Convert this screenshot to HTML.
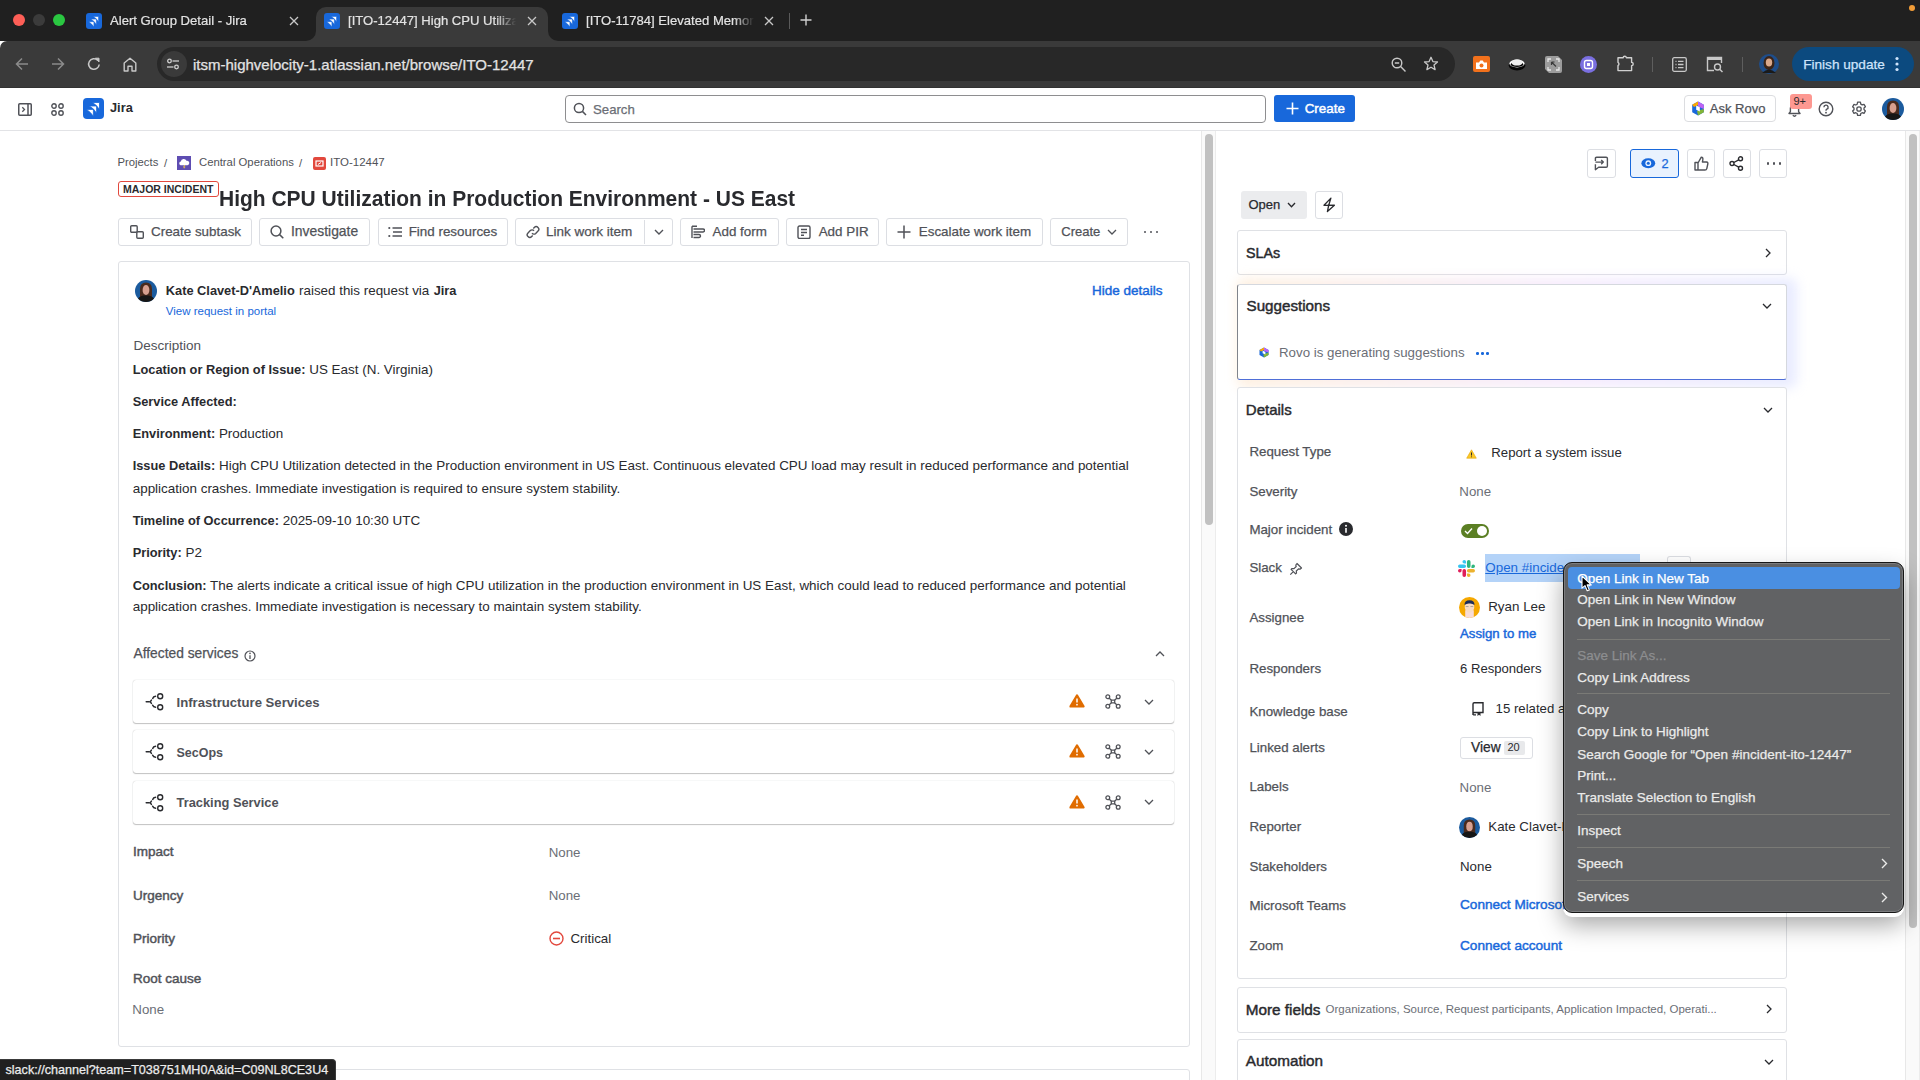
<!DOCTYPE html>
<html><head><meta charset="utf-8"><title>ITO-12447</title>
<style>
*{box-sizing:border-box;margin:0;padding:0}
html,body{width:1920px;height:1080px;overflow:hidden;background:#fff;font-family:"Liberation Sans",sans-serif;color:#292a2e}
.a{position:absolute}
.t{white-space:nowrap}
b{font-weight:bold}
</style></head><body>
<div class="a" style="left:0px;top:0px;width:1920px;height:41px;background:#202020"></div>
<div class="a" style="left:13px;top:14px;width:12px;height:12px;border-radius:50%;background:#fe5f57"></div>
<div class="a" style="left:33px;top:14px;width:12px;height:12px;border-radius:50%;background:#3b3b3b"></div>
<div class="a" style="left:53px;top:14px;width:12px;height:12px;border-radius:50%;background:#2ac741"></div>
<div class="a" style="left:316px;top:7px;width:232px;height:36px;background:#3a3a3a;border-radius:10px 10px 0 0"></div>
<div class="a" style="left:306px;top:31px;width:10px;height:10px;background:#3a3a3a"></div>
<div class="a" style="left:296px;top:21px;width:20px;height:20px;background:#202020;border-radius:0 0 10px 0"></div>
<div class="a" style="left:548px;top:31px;width:10px;height:10px;background:#3a3a3a"></div>
<div class="a" style="left:548px;top:21px;width:20px;height:20px;background:#202020;border-radius:0 0 0 10px"></div>
<div class="a" style="left:0px;top:41px;width:1920px;height:47px;background:#3a3a3a;border-radius:7px 0 0 0"></div>
<div class="a" style="left:0px;top:87px;width:1920px;height:1px;background:#323232"></div>
<svg class="a" style="left:86px;top:13px" width="16" height="16" viewBox="0 0 21 21"><rect width="21" height="21" rx="3.94" fill="#1868db"/><path d="M9.5 4.5L16.5 4.5L16.5 11.5L13.4 7.6ZM6.3999999999999995 8.0L13.6 8.0L13.6 15.2L10.5 11.1ZM3.6000000000000005 11.4L10.4 11.4L10.4 18.2L7.300000000000001 14.5Z" fill="#fff" stroke="#1868db" stroke-width="0.8" stroke-linejoin="round"/></svg>
<div class="a t" style="left:110px;top:14.41px;font-size:13.1px;line-height:13.1px;color:#e3e3e3;-webkit-text-stroke:0.2px #e3e3e3;width:172px;overflow:hidden;-webkit-mask-image:linear-gradient(90deg,#000 87%,transparent 99%)">Alert Group Detail - Jira</div>
<svg class="a" style="left:289px;top:16px;" width="10" height="10" viewBox="0 0 10 10" fill="none"><path d="M1 1L9 9M9 1L1 9" stroke="#c8c8c8" stroke-width="1.3"/></svg>
<svg class="a" style="left:324px;top:13px" width="16" height="16" viewBox="0 0 21 21"><rect width="21" height="21" rx="3.94" fill="#1868db"/><path d="M9.5 4.5L16.5 4.5L16.5 11.5L13.4 7.6ZM6.3999999999999995 8.0L13.6 8.0L13.6 15.2L10.5 11.1ZM3.6000000000000005 11.4L10.4 11.4L10.4 18.2L7.300000000000001 14.5Z" fill="#fff" stroke="#1868db" stroke-width="0.8" stroke-linejoin="round"/></svg>
<div class="a t" style="left:348px;top:14.41px;font-size:13.1px;line-height:13.1px;color:#e3e3e3;-webkit-text-stroke:0.2px #e3e3e3;width:170px;overflow:hidden;-webkit-mask-image:linear-gradient(90deg,#000 87%,transparent 99%)">[ITO-12447] High CPU Utilization in Production</div>
<svg class="a" style="left:527px;top:16px;" width="10" height="10" viewBox="0 0 10 10" fill="none"><path d="M1 1L9 9M9 1L1 9" stroke="#c8c8c8" stroke-width="1.3"/></svg>
<svg class="a" style="left:562px;top:13px" width="16" height="16" viewBox="0 0 21 21"><rect width="21" height="21" rx="3.94" fill="#1868db"/><path d="M9.5 4.5L16.5 4.5L16.5 11.5L13.4 7.6ZM6.3999999999999995 8.0L13.6 8.0L13.6 15.2L10.5 11.1ZM3.6000000000000005 11.4L10.4 11.4L10.4 18.2L7.300000000000001 14.5Z" fill="#fff" stroke="#1868db" stroke-width="0.8" stroke-linejoin="round"/></svg>
<div class="a t" style="left:586px;top:14.41px;font-size:13.1px;line-height:13.1px;color:#e3e3e3;-webkit-text-stroke:0.2px #e3e3e3;width:170px;overflow:hidden;-webkit-mask-image:linear-gradient(90deg,#000 87%,transparent 99%)">[ITO-11784] Elevated Memory Usage</div>
<svg class="a" style="left:764px;top:16px;" width="10" height="10" viewBox="0 0 10 10" fill="none"><path d="M1 1L9 9M9 1L1 9" stroke="#c8c8c8" stroke-width="1.3"/></svg>
<div class="a" style="left:789px;top:13px;width:1px;height:16px;background:#5a5a5a"></div>
<svg class="a" style="left:800px;top:14px;" width="12" height="12" viewBox="0 0 12 12" fill="none"><path d="M6 0.5V11.5M0.5 6H11.5" stroke="#d0d0d0" stroke-width="1.4"/></svg>
<div class="a" style="left:1909px;top:5px;width:6px;height:6px;border-radius:50%;background:#f29d38"></div>
<svg class="a" style="left:15px;top:57px;" width="14" height="14" viewBox="0 0 14 14" fill="none"><path d="M13 7H1.5M7 1.5L1.5 7L7 12.5" stroke="#8b8b8b" stroke-width="1.5"/></svg>
<svg class="a" style="left:51px;top:57px;" width="14" height="14" viewBox="0 0 14 14" fill="none"><path d="M1 7H12.5M7 1.5L12.5 7L7 12.5" stroke="#8b8b8b" stroke-width="1.5"/></svg>
<svg class="a" style="left:87px;top:57px;" width="14" height="14" viewBox="0 0 14 14" fill="none"><path d="M12.2 7.5A5.3 5.3 0 1 1 10.6 3.2" stroke="#c8c8c8" stroke-width="1.5"/><path d="M8.3 1.2H12V4.9Z" fill="#c8c8c8" stroke="#c8c8c8" stroke-width="1"/></svg>
<svg class="a" style="left:123px;top:57px;" width="14" height="15" viewBox="0 0 14 15" fill="none"><path d="M1.2 14V6L7 1.2L12.8 6V14H9V9.2H5V14Z" stroke="#c8c8c8" stroke-width="1.4" stroke-linejoin="round"/></svg>
<div class="a" style="left:157px;top:47px;width:1298px;height:34px;border-radius:17px;background:#282828"></div>
<div class="a" style="left:161px;top:51px;width:26px;height:26px;border-radius:13px;background:#3a3a3a"></div>
<svg class="a" style="left:166px;top:57px;" width="14" height="14" viewBox="0 0 14 14" fill="none"><circle cx="3.5" cy="4" r="1.8" stroke="#d0d0d0" stroke-width="1.3"/><path d="M6.5 4H13" stroke="#d0d0d0" stroke-width="1.3"/><circle cx="10.5" cy="10" r="1.8" stroke="#d0d0d0" stroke-width="1.3"/><path d="M1 10H7.5" stroke="#d0d0d0" stroke-width="1.3"/></svg>
<div class="a t " style="left:193.00px;top:56.80px;font-size:15px;line-height:15px;color:#e3e3e3;-webkit-text-stroke:0.25px #e3e3e3;">itsm-highvelocity-1.atlassian.net/browse/ITO-12447</div>
<svg class="a" style="left:1391px;top:57px;" width="16" height="16" viewBox="0 0 16 16" fill="none"><circle cx="6" cy="6" r="4.8" stroke="#c8c8c8" stroke-width="1.4"/><path d="M3.8 6H8.2M9.6 9.6L14.5 14.5" stroke="#c8c8c8" stroke-width="1.4"/></svg>
<svg class="a" style="left:1423px;top:56px;" width="16" height="16" viewBox="0 0 16 16" fill="none"><path d="M8 1.3L9.9 5.6L14.5 6L11 9L12.1 13.6L8 11.2L3.9 13.6L5 9L1.5 6L6.1 5.6Z" stroke="#c8c8c8" stroke-width="1.3" stroke-linejoin="round"/></svg>
<svg class="a" style="left:1473px;top:56px;" width="17" height="16" viewBox="0 0 17 16" fill="none"><rect x="0" y="0" width="17" height="16" rx="2" fill="#f2711c"/><path d="M3 6.5h3l1.3-2h2.4l1.3 2h3v6.5h-11z" fill="#fff"/><circle cx="8.5" cy="9.5" r="2" fill="#f2711c"/></svg>
<svg class="a" style="left:1508px;top:57px;" width="18" height="14" viewBox="0 0 18 14" fill="none"><ellipse cx="9" cy="8.6" rx="8.3" ry="4.8" fill="#050505"/><ellipse cx="9" cy="6.6" rx="7.6" ry="3.9" fill="#fafafa"/><ellipse cx="9" cy="7.4" rx="6.3" ry="2.6" fill="#050505"/><ellipse cx="9" cy="5.4" rx="5.6" ry="3.2" fill="#efefef"/></svg>
<svg class="a" style="left:1545px;top:56px;" width="17" height="17" viewBox="0 0 17 17" fill="none"><path d="M0 2Q0 0 2 0H13L17 4V15Q17 17 15 17H4L0 13Z" fill="#9c9c9c"/><path d="M3 6V3H6M11 3H14V6M14 11V14H11M6 14H3V11" stroke="#e6e6e6" stroke-width="1.3"/><path d="M6.5 6L11 10.5M6.5 6V9M6.5 6H9.5" stroke="#3a3a3a" stroke-width="1.2"/></svg>
<svg class="a" style="left:1580px;top:56px;" width="17" height="17" viewBox="0 0 17 17" fill="none"><circle cx="8.5" cy="8.5" r="8.5" fill="#7a6fe0"/><rect x="4.5" y="4.5" width="8" height="8" rx="2" stroke="#fff" stroke-width="1.4"/><rect x="7" y="7" width="3" height="3" fill="#fff"/></svg>
<svg class="a" style="left:1616px;top:55px;" width="19" height="17" viewBox="0 0 19 17" fill="none"><path d="M2 2.8H7.2A1.6 1.6 0 0 1 10.4 2.8H15.6V7.4A1.6 1.6 0 0 1 15.6 10.6V15.6H2V10.6A1.8 1.8 0 0 0 2 7.4Z" stroke="#d0d0d0" stroke-width="1.4" stroke-linejoin="round"/></svg>
<div class="a" style="left:1652px;top:57px;width:1px;height:15px;background:#5e5e5e"></div>
<svg class="a" style="left:1672px;top:57px;" width="15" height="15" viewBox="0 0 15 15" fill="none"><rect x="0.7" y="0.7" width="13.6" height="13.6" rx="1.5" stroke="#c8c8c8" stroke-width="1.3"/><path d="M3.5 4.3h1M6 4.3h5.5M3.5 7.5h1M6 7.5h5.5M3.5 10.7h1M6 10.7h5.5" stroke="#c8c8c8" stroke-width="1.3"/></svg>
<svg class="a" style="left:1706px;top:56px;" width="18" height="17" viewBox="0 0 18 17" fill="none"><path d="M8 14.5H1.5V1.5H15.5V7" stroke="#c8c8c8" stroke-width="1.4"/><rect x="1.5" y="1.5" width="14" height="2.5" fill="#c8c8c8"/><circle cx="11.5" cy="11" r="3" stroke="#c8c8c8" stroke-width="1.4"/><path d="M13.7 13.2L16.5 16" stroke="#c8c8c8" stroke-width="1.5"/></svg>
<div class="a" style="left:1742px;top:57px;width:1px;height:15px;background:#5e5e5e"></div>
<svg class="a" style="left:1759px;top:54px" width="20" height="20" viewBox="0 0 20 20"><circle cx="10" cy="10" r="10" fill="#1e4d8a"/><ellipse cx="10" cy="9" rx="5.5" ry="7" fill="#3b2418"/><ellipse cx="10" cy="8.5" rx="3.2" ry="4" fill="#d9a88c"/><path d="M3 19 Q10 12 17 19Z" fill="#1a1a1a"/></svg>
<div class="a" style="left:1792px;top:47px;width:122px;height:34px;border-radius:17px;background:#0c4a7f"></div>
<div class="a t " style="left:1803.20px;top:57.99px;font-size:13.6px;line-height:13.6px;color:#cfe4fb;-webkit-text-stroke:0.25px #cfe4fb;">Finish update</div>
<svg class="a" style="left:1895px;top:56px;" width="4" height="16" viewBox="0 0 4 16" fill="none"><circle cx="2" cy="2.5" r="1.6" fill="#cfe4fb"/><circle cx="2" cy="8" r="1.6" fill="#cfe4fb"/><circle cx="2" cy="13.5" r="1.6" fill="#cfe4fb"/></svg>
<div class="a" style="left:0px;top:88px;width:1920px;height:42px;background:#fff"></div>
<div class="a" style="left:0px;top:130px;width:1920px;height:1px;background:#e2e3e6"></div>
<svg class="a" style="left:18px;top:103px;" width="14" height="13" viewBox="0 0 14 13" fill="none"><rect x="0.75" y="0.75" width="12.5" height="11.5" rx="1" stroke="#505258" stroke-width="1.5"/><path d="M10 1V12" stroke="#505258" stroke-width="1.5"/><path d="M4.3 4.3L6.5 6.5L4.3 8.7" stroke="#505258" stroke-width="1.3"/></svg>
<svg class="a" style="left:51px;top:103px;" width="13" height="13" viewBox="0 0 13 13" fill="none"><circle cx="3" cy="3" r="2.2" stroke="#505258" stroke-width="1.4"/><circle cx="10" cy="3" r="2.2" stroke="#505258" stroke-width="1.4"/><circle cx="3" cy="10" r="2.2" stroke="#505258" stroke-width="1.4"/><circle cx="10" cy="10" r="2.2" stroke="#505258" stroke-width="1.4"/></svg>
<svg class="a" style="left:83px;top:98px" width="21" height="21" viewBox="0 0 21 21"><rect width="21" height="21" rx="4.00" fill="#1868db"/><path d="M9.5 4.5L16.5 4.5L16.5 11.5L13.4 7.6ZM6.3999999999999995 8.0L13.6 8.0L13.6 15.2L10.5 11.1ZM3.6000000000000005 11.4L10.4 11.4L10.4 18.2L7.300000000000001 14.5Z" fill="#fff" stroke="#1868db" stroke-width="0.8" stroke-linejoin="round"/></svg>
<div class="a t " style="left:110.00px;top:101.96px;font-size:12.8px;line-height:12.8px;color:#292a2e;font-weight:bold;">Jira</div>
<div class="a" style="left:565px;top:95px;width:701px;height:28px;border:1px solid #8e8e90;border-radius:4px;background:#fff"></div>
<svg class="a" style="left:572.5px;top:102px;" width="14" height="14" viewBox="0 0 14 14" fill="none"><circle cx="6" cy="6" r="4.6" stroke="#505258" stroke-width="1.5"/><path d="M9.4 9.4L13 13" stroke="#505258" stroke-width="1.5"/></svg>
<div class="a t " style="left:593.00px;top:102.63px;font-size:13.2px;line-height:13.2px;color:#6b6e76;-webkit-text-stroke:0.25px #6b6e76;">Search</div>
<div class="a" style="left:1274px;top:95px;width:81px;height:27px;border-radius:3px;background:#1868db"></div>
<svg class="a" style="left:1286px;top:102px;" width="13" height="13" viewBox="0 0 13 13" fill="none"><path d="M6.5 0.5V12.5M0.5 6.5H12.5" stroke="#fff" stroke-width="1.6"/></svg>
<div class="a t " style="left:1304.70px;top:101.66px;font-size:13.4px;line-height:13.4px;color:#fff;-webkit-text-stroke:0.45px #fff;">Create</div>
<div class="a" style="left:1684px;top:95px;width:92px;height:27px;border:1px solid #dcdde0;border-radius:4px;background:#fff"></div>
<svg class="a" style="left:1691px;top:101px;" width="14" height="15" viewBox="0 0 14 15" fill="none"><path d="M7 0.5L12.8 3.8V11.2L7 14.5L1.2 11.2V3.8Z" fill="#1868db"/><path d="M7 0.5L12.8 3.8V8L7 5.5Z" fill="#bf63f3"/><path d="M12.8 8V11.2L7 14.5L6 10Z" fill="#82b536"/><path d="M7 0.5L1.2 3.8L3 6L7 4Z" fill="#fca700"/><path d="M5.2 4.5L8.8 6.2V10.5L5.2 8.8Z" fill="#fff"/></svg>
<div class="a t " style="left:1709.80px;top:101.90px;font-size:13px;line-height:13px;color:#505258;-webkit-text-stroke:0.25px #505258;">Ask Rovo</div>
<svg class="a" style="left:1787px;top:102px;" width="15" height="15" viewBox="0 0 15 15" fill="none"><path d="M2 11.5H13L11.6 9.6V6.3A4.1 4.1 0 0 0 3.4 6.3V9.6Z" stroke="#505258" stroke-width="1.4" stroke-linejoin="round"/><path d="M5.8 13.3Q7.5 15 9.2 13.3" stroke="#505258" stroke-width="1.4"/></svg>
<div class="a" style="left:1790px;top:94px;width:22px;height:14.5px;background:#fd9891;border-radius:3px"></div>
<div class="a t " style="left:1793.50px;top:96.19px;font-size:11px;line-height:11px;color:#292a2e;">9+</div>
<svg class="a" style="left:1818px;top:101px;" width="16" height="16" viewBox="0 0 16 16" fill="none"><circle cx="8" cy="8" r="6.8" stroke="#505258" stroke-width="1.4"/><path d="M5.9 6.2A2.1 2.1 0 1 1 8.8 8.2C8.1 8.5 8 8.9 8 9.7" stroke="#505258" stroke-width="1.4"/><circle cx="8" cy="11.7" r="0.9" fill="#505258"/></svg>
<svg class="a" style="left:1851px;top:101px;" width="16" height="16" viewBox="0 0 16 16" fill="none"><path d="M6.6 1.2h2.8l.4 1.9 1.4.8 1.8-.6 1.4 2.4-1.4 1.3v1.6l1.4 1.3-1.4 2.4-1.8-.6-1.4.8-.4 1.9H6.6l-.4-1.9-1.4-.8-1.8.6L1.6 10l1.4-1.3V7.1L1.6 5.8 3 3.4l1.8.6 1.4-.8z" stroke="#505258" stroke-width="1.3" stroke-linejoin="round"/><circle cx="8" cy="8" r="2.2" stroke="#505258" stroke-width="1.3"/></svg>
<svg class="a" style="left:1882px;top:98px" width="22" height="22" viewBox="0 0 22 22"><defs><clipPath id="ck188298"><circle cx="11" cy="11" r="11"/></clipPath></defs><g clip-path="url(#ck188298)"><rect width="22" height="22" fill="#1b5b9e"/><path d="M5 20V9Q5 2.5 11 2.5Q17 2.5 17 9V20Z" fill="#4a2b1e"/><ellipse cx="11" cy="10" rx="3.4" ry="5" fill="#d7a090"/><path d="M1 23Q3 15.5 9 15.5H13Q19 15.5 21 23Z" fill="#161616"/></g></svg>
<div class="a t " style="left:117.50px;top:156.93px;font-size:11.3px;line-height:11.3px;color:#505258;">Projects</div>
<div class="a t " style="left:164.00px;top:157.93px;font-size:11.3px;line-height:11.3px;color:#505258;">/</div>
<svg class="a" style="left:177px;top:156px;" width="14" height="14" viewBox="0 0 14 14" fill="none"><rect width="14" height="14" fill="#5e4db2"/><path d="M3.5 9.3A2 2 0 0 1 3.8 5.5A3 3 0 0 1 9.5 4.8A2.2 2.2 0 0 1 10.5 9.3Z" fill="#fff"/><path d="M7.2 9L6 11.5H7.4L6.6 13.2L8.6 10.7H7.3L8 9Z" fill="#f5cd47"/></svg>
<div class="a t " style="left:199.00px;top:156.93px;font-size:11.3px;line-height:11.3px;color:#505258;">Central Operations</div>
<div class="a t " style="left:299.00px;top:157.93px;font-size:11.3px;line-height:11.3px;color:#505258;">/</div>
<svg class="a" style="left:313px;top:157px;" width="13" height="13" viewBox="0 0 13 13" fill="none"><rect width="13" height="13" rx="2" fill="#e2483d"/><rect x="3" y="4" width="7" height="5" stroke="#fff" stroke-width="1.2"/><path d="M5 7.5L8 5.5" stroke="#fff" stroke-width="1"/></svg>
<div class="a t " style="left:330.00px;top:156.77px;font-size:11.5px;line-height:11.5px;color:#505258;">ITO-12447</div>
<div class="a" style="left:118px;top:181px;width:101px;height:16px;border:1px solid #e2483d;border-radius:3px;background:#fff"></div>
<div class="a t " style="left:123.00px;top:184.41px;font-size:10.5px;line-height:10.5px;color:#292a2e;font-weight:bold;">MAJOR INCIDENT</div>
<div class="a t " style="left:218.50px;top:187.51px;font-size:22.2px;line-height:22.2px;color:#292a2e;font-weight:bold;transform:scaleX(0.946);transform-origin:0 0;">High CPU Utilization in Production Environment - US East</div>
<div class="a" style="left:118px;top:218px;width:134px;height:28px;border:1px solid #dcdee3;border-radius:3px;background:#fff"></div>
<svg class="a" style="left:130px;top:225px;" width="14" height="14" viewBox="0 0 14 14" fill="none"><rect x="0.7" y="0.7" width="6.5" height="6.5" rx="1" stroke="#505258" stroke-width="1.4"/><rect x="6.8" y="6.8" width="6.5" height="6.5" rx="1" stroke="#505258" stroke-width="1.4"/></svg>
<div class="a t " style="left:151.00px;top:224.96px;font-size:13.4px;line-height:13.4px;color:#505258;-webkit-text-stroke:0.25px #505258;">Create subtask</div>
<div class="a" style="left:259px;top:218px;width:111px;height:28px;border:1px solid #dcdee3;border-radius:3px;background:#fff"></div>
<svg class="a" style="left:270px;top:225px;" width="14" height="14" viewBox="0 0 14 14" fill="none"><circle cx="6" cy="6" r="4.9" stroke="#505258" stroke-width="1.5"/><path d="M9.6 9.6L13.3 13.3" stroke="#505258" stroke-width="1.5"/></svg>
<div class="a t " style="left:291.00px;top:224.53px;font-size:13.9px;line-height:13.9px;color:#505258;-webkit-text-stroke:0.25px #505258;">Investigate</div>
<div class="a" style="left:378px;top:218px;width:130px;height:28px;border:1px solid #dcdee3;border-radius:3px;background:#fff"></div>
<svg class="a" style="left:388px;top:225px;" width="14" height="14" viewBox="0 0 14 14" fill="none"><circle cx="1.3" cy="3" r="1.1" fill="#505258"/><circle cx="1.3" cy="11" r="1.1" fill="#505258"/><path d="M4.5 3H14M5 7H14M4.5 11H14" stroke="#505258" stroke-width="1.4"/></svg>
<div class="a t " style="left:408.70px;top:224.96px;font-size:13.4px;line-height:13.4px;color:#505258;-webkit-text-stroke:0.25px #505258;">Find resources</div>
<div class="a" style="left:515px;top:218px;width:158px;height:28px;border:1px solid #dcdee3;border-radius:3px;background:#fff"></div>
<div class="a" style="left:644px;top:220px;width:1px;height:24px;background:#dcdee3"></div>
<svg class="a" style="left:526px;top:225px;" width="14" height="14" viewBox="0 0 14 14" fill="none"><path d="M6 8.2A2.6 2.6 0 0 0 9.7 8.4L12 6.1A2.6 2.6 0 0 0 8.3 2.4L7.3 3.4M8 5.8A2.6 2.6 0 0 0 4.3 5.6L2 7.9A2.6 2.6 0 0 0 5.7 11.6L6.7 10.6" stroke="#505258" stroke-width="1.4"/></svg>
<div class="a t " style="left:546.00px;top:224.87px;font-size:13.5px;line-height:13.5px;color:#505258;-webkit-text-stroke:0.25px #505258;">Link work item</div>
<svg class="a" style="left:654px;top:229px;" width="10" height="6" viewBox="0 0 10 6" fill="none"><path d="M1 1L5.0 5L9 1" stroke="#505258" stroke-width="1.4"/></svg>
<div class="a" style="left:680px;top:218px;width:99px;height:28px;border:1px solid #dcdee3;border-radius:3px;background:#fff"></div>
<svg class="a" style="left:690.5px;top:225px;" width="14" height="14" viewBox="0 0 14 14" fill="none"><path d="M1 1.2H6M1 1.2V13M2.5 4H12A1.5 1.5 0 0 1 12 7H2.5M2.5 9.5H8A1.5 1.5 0 0 1 8 12.5H2.5" stroke="#505258" stroke-width="1.4"/></svg>
<div class="a t " style="left:712.50px;top:224.96px;font-size:13.4px;line-height:13.4px;color:#505258;-webkit-text-stroke:0.25px #505258;">Add form</div>
<div class="a" style="left:786px;top:218px;width:93px;height:28px;border:1px solid #dcdee3;border-radius:3px;background:#fff"></div>
<svg class="a" style="left:797px;top:225px;" width="14" height="14" viewBox="0 0 14 14" fill="none"><rect x="1" y="1" width="12" height="12.5" rx="1.5" stroke="#505258" stroke-width="1.4"/><path d="M4 4.5H10M4 7.5H10M4 10.3H7" stroke="#505258" stroke-width="1.4"/></svg>
<div class="a t " style="left:818.70px;top:224.96px;font-size:13.4px;line-height:13.4px;color:#505258;-webkit-text-stroke:0.25px #505258;">Add PIR</div>
<div class="a" style="left:886px;top:218px;width:157px;height:28px;border:1px solid #dcdee3;border-radius:3px;background:#fff"></div>
<svg class="a" style="left:897px;top:225px;" width="14" height="14" viewBox="0 0 14 14" fill="none"><path d="M7 0.5V13.5M0.5 7H13.5" stroke="#505258" stroke-width="1.5"/></svg>
<div class="a t " style="left:918.80px;top:224.96px;font-size:13.4px;line-height:13.4px;color:#505258;-webkit-text-stroke:0.25px #505258;">Escalate work item</div>
<div class="a" style="left:1050px;top:218px;width:78px;height:28px;border:1px solid #dcdee3;border-radius:3px;background:#fff"></div>
<div class="a t " style="left:1061.30px;top:225.30px;font-size:13px;line-height:13px;color:#505258;-webkit-text-stroke:0.25px #505258;">Create</div>
<svg class="a" style="left:1107px;top:229px;" width="10" height="6" viewBox="0 0 10 6" fill="none"><path d="M1 1L5.0 5L9 1" stroke="#505258" stroke-width="1.3"/></svg>
<div class="a" style="left:1143.5px;top:230.5px;width:2.6px;height:2.6px;border-radius:50%;background:#505258"></div>
<div class="a" style="left:1149.5px;top:230.5px;width:2.6px;height:2.6px;border-radius:50%;background:#505258"></div>
<div class="a" style="left:1155.5px;top:230.5px;width:2.6px;height:2.6px;border-radius:50%;background:#505258"></div>
<div class="a" style="left:118px;top:261px;width:1072px;height:786px;border:1px solid #dfe1e5;border-radius:3px;background:#fff"></div>
<svg class="a" style="left:135px;top:280px" width="22" height="22" viewBox="0 0 22 22"><defs><clipPath id="ck135280"><circle cx="11" cy="11" r="11"/></clipPath></defs><g clip-path="url(#ck135280)"><rect width="22" height="22" fill="#1b5b9e"/><path d="M5 20V9Q5 2.5 11 2.5Q17 2.5 17 9V20Z" fill="#4a2b1e"/><ellipse cx="11" cy="10" rx="3.4" ry="5" fill="#d7a090"/><path d="M1 23Q3 15.5 9 15.5H13Q19 15.5 21 23Z" fill="#161616"/></g></svg>
<div class="a t " style="left:165.80px;top:284.56px;font-size:12.8px;line-height:12.8px;color:#292a2e;font-weight:bold;">Kate Clavet-D'Amelio</div>
<div class="a t " style="left:299.00px;top:284.06px;font-size:13.4px;line-height:13.4px;color:#292a2e;">raised this request via</div>
<div class="a t " style="left:433.70px;top:284.56px;font-size:12.8px;line-height:12.8px;color:#292a2e;font-weight:bold;">Jira</div>
<div class="a t " style="left:165.80px;top:306.27px;font-size:11.5px;line-height:11.5px;color:#1868db;">View request in portal</div>
<div class="a t " style="left:1092.00px;top:283.57px;font-size:13.5px;line-height:13.5px;color:#1868db;-webkit-text-stroke:0.45px #1868db;">Hide details</div>
<div class="a t " style="left:133.60px;top:338.87px;font-size:13.5px;line-height:13.5px;color:#505258;">Description</div>
<div class="a t" style="left:132.7px;top:362.91px;font-size:13.45px;line-height:13.45px;color:#292a2e;white-space:nowrap"><b style="font-size:12.8px">Location or Region of Issue:</b> US East (N. Virginia)</div>
<div class="a t" style="left:132.7px;top:394.81px;font-size:13.45px;line-height:13.45px;color:#292a2e;white-space:nowrap"><b style="font-size:12.8px">Service Affected:</b></div>
<div class="a t" style="left:132.7px;top:427.41px;font-size:13.45px;line-height:13.45px;color:#292a2e;white-space:nowrap"><b style="font-size:12.8px">Environment:</b> Production</div>
<div class="a t" style="left:132.7px;top:459.41px;font-size:13.45px;line-height:13.45px;color:#292a2e;white-space:nowrap"><b style="font-size:12.8px">Issue Details:</b> High CPU Utilization detected in the Production environment in US East. Continuous elevated CPU load may result in reduced performance and potential</div>
<div class="a t" style="left:132.7px;top:481.71px;font-size:13.45px;line-height:13.45px;color:#292a2e;white-space:nowrap">application crashes. Immediate investigation is required to ensure system stability.</div>
<div class="a t" style="left:132.7px;top:513.81px;font-size:13.45px;line-height:13.45px;color:#292a2e;white-space:nowrap"><b style="font-size:12.8px">Timeline of Occurrence:</b> 2025-09-10 10:30 UTC</div>
<div class="a t" style="left:132.7px;top:545.91px;font-size:13.45px;line-height:13.45px;color:#292a2e;white-space:nowrap"><b style="font-size:12.8px">Priority:</b> P2</div>
<div class="a t" style="left:132.7px;top:578.81px;font-size:13.45px;line-height:13.45px;color:#292a2e;white-space:nowrap"><b style="font-size:12.8px">Conclusion:</b> The alerts indicate a critical issue of high CPU utilization in the production environment in US East, which could lead to reduced performance and potential</div>
<div class="a t" style="left:132.7px;top:599.91px;font-size:13.45px;line-height:13.45px;color:#292a2e;white-space:nowrap">application crashes. Immediate investigation is necessary to maintain system stability.</div>
<div class="a t " style="left:133.50px;top:646.52px;font-size:13.8px;line-height:13.8px;color:#505258;-webkit-text-stroke:0.25px #505258;">Affected services</div>
<svg class="a" style="left:244px;top:650px;" width="12" height="12" viewBox="0 0 12 12" fill="none"><circle cx="6" cy="6" r="5" stroke="#505258" stroke-width="1.2"/><path d="M6 5.3V9" stroke="#505258" stroke-width="1.3"/><circle cx="6" cy="3.4" r="0.8" fill="#505258"/></svg>
<svg class="a" style="left:1155px;top:651px;" width="10" height="6" viewBox="0 0 10 6" fill="none"><path d="M1 5L5 1L9 5" stroke="#505258" stroke-width="1.3"/></svg>
<div class="a" style="left:133px;top:680.0px;width:1041px;height:43px;border-radius:3px;background:#fff;box-shadow:0 1px 1px rgba(30,31,33,0.25),0 0 1px rgba(30,31,33,0.31)"></div>
<svg class="a" style="left:145px;top:692.0px;" width="20" height="19" viewBox="0 0 20 19" fill="none"><path d="M1.2 9.7H4.1M6.4 8.1L5.2 9.7L6.4 11.4M7.7 6.4Q8.3 4.5 10.6 4.3M7.7 13.2Q8.3 15.1 10.6 15.3" stroke="#292a2e" stroke-width="1.5" stroke-linecap="round"/><circle cx="15.2" cy="4.3" r="2.5" stroke="#292a2e" stroke-width="1.4"/><circle cx="15.2" cy="15.2" r="2.5" stroke="#292a2e" stroke-width="1.4"/></svg>
<div class="a t " style="left:176.50px;top:695.57px;font-size:13.15px;line-height:13.15px;color:#505258;font-weight:bold;">Infrastructure Services</div>
<svg class="a" style="left:1069px;top:694.0px;" width="16" height="14" viewBox="0 0 16 14" fill="none"><path d="M8 1.6L14.4 12.4H1.6Z" fill="#e06c00" stroke="#e06c00" stroke-width="2.4" stroke-linejoin="round"/><path d="M8 4.6V8.6" stroke="#fff" stroke-width="1.5"/><circle cx="8" cy="10.7" r="0.85" fill="#fff"/></svg>
<svg class="a" style="left:1105px;top:694.0px;" width="16" height="15" viewBox="0 0 16 15" fill="none"><circle cx="2.8" cy="2.8" r="1.9" stroke="#505258" stroke-width="1.3"/><circle cx="13.2" cy="2.8" r="1.9" stroke="#505258" stroke-width="1.3"/><circle cx="2.8" cy="12.2" r="1.9" stroke="#505258" stroke-width="1.3"/><circle cx="13.2" cy="12.2" r="1.9" stroke="#505258" stroke-width="1.3"/><path d="M4.2 4.2L6.3 6.1M11.8 4.2L9.7 6.1M4.2 10.8L6.3 8.9M11.8 10.8L9.7 8.9" stroke="#505258" stroke-width="1.3"/><path d="M6.3 6.1H9.7V8.9H6.3Z" stroke="#505258" stroke-width="1.3" stroke-linejoin="round"/></svg>
<svg class="a" style="left:1144px;top:698.5px;" width="10" height="6" viewBox="0 0 10 6" fill="none"><path d="M1 1L5.0 5L9 1" stroke="#505258" stroke-width="1.3"/></svg>
<div class="a" style="left:133px;top:730.4px;width:1041px;height:43px;border-radius:3px;background:#fff;box-shadow:0 1px 1px rgba(30,31,33,0.25),0 0 1px rgba(30,31,33,0.31)"></div>
<svg class="a" style="left:145px;top:742.4px;" width="20" height="19" viewBox="0 0 20 19" fill="none"><path d="M1.2 9.7H4.1M6.4 8.1L5.2 9.7L6.4 11.4M7.7 6.4Q8.3 4.5 10.6 4.3M7.7 13.2Q8.3 15.1 10.6 15.3" stroke="#292a2e" stroke-width="1.5" stroke-linecap="round"/><circle cx="15.2" cy="4.3" r="2.5" stroke="#292a2e" stroke-width="1.4"/><circle cx="15.2" cy="15.2" r="2.5" stroke="#292a2e" stroke-width="1.4"/></svg>
<div class="a t " style="left:176.50px;top:746.52px;font-size:12.5px;line-height:12.5px;color:#505258;font-weight:bold;">SecOps</div>
<svg class="a" style="left:1069px;top:744.4px;" width="16" height="14" viewBox="0 0 16 14" fill="none"><path d="M8 1.6L14.4 12.4H1.6Z" fill="#e06c00" stroke="#e06c00" stroke-width="2.4" stroke-linejoin="round"/><path d="M8 4.6V8.6" stroke="#fff" stroke-width="1.5"/><circle cx="8" cy="10.7" r="0.85" fill="#fff"/></svg>
<svg class="a" style="left:1105px;top:744.4px;" width="16" height="15" viewBox="0 0 16 15" fill="none"><circle cx="2.8" cy="2.8" r="1.9" stroke="#505258" stroke-width="1.3"/><circle cx="13.2" cy="2.8" r="1.9" stroke="#505258" stroke-width="1.3"/><circle cx="2.8" cy="12.2" r="1.9" stroke="#505258" stroke-width="1.3"/><circle cx="13.2" cy="12.2" r="1.9" stroke="#505258" stroke-width="1.3"/><path d="M4.2 4.2L6.3 6.1M11.8 4.2L9.7 6.1M4.2 10.8L6.3 8.9M11.8 10.8L9.7 8.9" stroke="#505258" stroke-width="1.3"/><path d="M6.3 6.1H9.7V8.9H6.3Z" stroke="#505258" stroke-width="1.3" stroke-linejoin="round"/></svg>
<svg class="a" style="left:1144px;top:748.9px;" width="10" height="6" viewBox="0 0 10 6" fill="none"><path d="M1 1L5.0 5L9 1" stroke="#505258" stroke-width="1.3"/></svg>
<div class="a" style="left:133px;top:780.8px;width:1041px;height:43px;border-radius:3px;background:#fff;box-shadow:0 1px 1px rgba(30,31,33,0.25),0 0 1px rgba(30,31,33,0.31)"></div>
<svg class="a" style="left:145px;top:792.8px;" width="20" height="19" viewBox="0 0 20 19" fill="none"><path d="M1.2 9.7H4.1M6.4 8.1L5.2 9.7L6.4 11.4M7.7 6.4Q8.3 4.5 10.6 4.3M7.7 13.2Q8.3 15.1 10.6 15.3" stroke="#292a2e" stroke-width="1.5" stroke-linecap="round"/><circle cx="15.2" cy="4.3" r="2.5" stroke="#292a2e" stroke-width="1.4"/><circle cx="15.2" cy="15.2" r="2.5" stroke="#292a2e" stroke-width="1.4"/></svg>
<div class="a t " style="left:176.50px;top:796.62px;font-size:12.85px;line-height:12.85px;color:#505258;font-weight:bold;">Tracking Service</div>
<svg class="a" style="left:1069px;top:794.8px;" width="16" height="14" viewBox="0 0 16 14" fill="none"><path d="M8 1.6L14.4 12.4H1.6Z" fill="#e06c00" stroke="#e06c00" stroke-width="2.4" stroke-linejoin="round"/><path d="M8 4.6V8.6" stroke="#fff" stroke-width="1.5"/><circle cx="8" cy="10.7" r="0.85" fill="#fff"/></svg>
<svg class="a" style="left:1105px;top:794.8px;" width="16" height="15" viewBox="0 0 16 15" fill="none"><circle cx="2.8" cy="2.8" r="1.9" stroke="#505258" stroke-width="1.3"/><circle cx="13.2" cy="2.8" r="1.9" stroke="#505258" stroke-width="1.3"/><circle cx="2.8" cy="12.2" r="1.9" stroke="#505258" stroke-width="1.3"/><circle cx="13.2" cy="12.2" r="1.9" stroke="#505258" stroke-width="1.3"/><path d="M4.2 4.2L6.3 6.1M11.8 4.2L9.7 6.1M4.2 10.8L6.3 8.9M11.8 10.8L9.7 8.9" stroke="#505258" stroke-width="1.3"/><path d="M6.3 6.1H9.7V8.9H6.3Z" stroke="#505258" stroke-width="1.3" stroke-linejoin="round"/></svg>
<svg class="a" style="left:1144px;top:799.3px;" width="10" height="6" viewBox="0 0 10 6" fill="none"><path d="M1 1L5.0 5L9 1" stroke="#505258" stroke-width="1.3"/></svg>
<div class="a t " style="left:133.00px;top:844.77px;font-size:13.5px;line-height:13.5px;color:#505258;-webkit-text-stroke:0.45px #505258;">Impact</div>
<div class="a t " style="left:133.00px;top:888.57px;font-size:13.5px;line-height:13.5px;color:#505258;-webkit-text-stroke:0.45px #505258;">Urgency</div>
<div class="a t " style="left:133.00px;top:931.57px;font-size:13.5px;line-height:13.5px;color:#505258;-webkit-text-stroke:0.45px #505258;">Priority</div>
<div class="a t " style="left:133.00px;top:972.37px;font-size:13.5px;line-height:13.5px;color:#505258;-webkit-text-stroke:0.45px #505258;">Root cause</div>
<div class="a t " style="left:548.70px;top:846.04px;font-size:13.3px;line-height:13.3px;color:#6b6e76;">None</div>
<div class="a t " style="left:548.70px;top:888.74px;font-size:13.3px;line-height:13.3px;color:#6b6e76;">None</div>
<svg class="a" style="left:548.5px;top:931px;" width="15" height="15" viewBox="0 0 15 15" fill="none"><circle cx="7.5" cy="7.5" r="6.5" stroke="#e2483d" stroke-width="1.4"/><path d="M4 7.5H11" stroke="#e2483d" stroke-width="1.6"/></svg>
<div class="a t " style="left:570.50px;top:931.74px;font-size:13.3px;line-height:13.3px;color:#292a2e;">Critical</div>
<div class="a t " style="left:132.30px;top:1002.74px;font-size:13.3px;line-height:13.3px;color:#6b6e76;">None</div>
<div class="a" style="left:118px;top:1069px;width:1072px;height:30px;border:1px solid #dfe1e5;border-radius:3px;background:#fff"></div>
<div class="a" style="left:0px;top:1059px;width:336px;height:21px;background:#202020;border:1px solid #3a3a3a;border-left:0;border-bottom:0;border-radius:0 4px 0 0"></div>
<div class="a t " style="left:5.50px;top:1063.83px;font-size:12.6px;line-height:12.6px;color:#ececec;-webkit-text-stroke:0.25px #ececec;">slack://channel?team=T038751MH0A&amp;id=C09NL8CE3U4</div>
<div class="a" style="left:1201px;top:131px;width:15px;height:949px;background:#fafafa;border-left:1px solid #e8e8e8;border-right:1px solid #ececec"></div>
<div class="a" style="left:1205px;top:134px;width:8px;height:391px;background:#c1c1c1;border-radius:4px"></div>
<div class="a" style="left:1587px;top:149px;width:29px;height:29px;border:1px solid #dcdee3;border-radius:3px;background:#fff"></div>
<div class="a" style="left:1687px;top:149px;width:28px;height:29px;border:1px solid #dcdee3;border-radius:3px;background:#fff"></div>
<div class="a" style="left:1723px;top:149px;width:28px;height:29px;border:1px solid #dcdee3;border-radius:3px;background:#fff"></div>
<div class="a" style="left:1759px;top:149px;width:28px;height:29px;border:1px solid #dcdee3;border-radius:3px;background:#fff"></div>
<svg class="a" style="left:1594px;top:156px;" width="15" height="15" viewBox="0 0 15 15" fill="none"><path d="M1.4 5V2.4Q1.4 1.2 2.6 1.2H12.2Q13.4 1.2 13.4 2.4V10.1Q13.4 11.3 12.2 11.3H4.6L1.4 13.7V8.2M1.4 6.1H9.3M7.2 4L9.3 6.1L7.2 8.2" stroke="#505258" stroke-width="1.4" stroke-linejoin="round"/></svg>
<div class="a" style="left:1630px;top:149px;width:49px;height:29px;border:1px solid #1868db;border-radius:3px;background:#e9f2fe"></div>
<svg class="a" style="left:1641px;top:158px;" width="15" height="11" viewBox="0 0 15 11" fill="none"><ellipse cx="7.3" cy="5.2" rx="6.9" ry="5" fill="#1868db"/><circle cx="7.3" cy="5.2" r="2.9" fill="#e9f2fe"/><circle cx="7.3" cy="5.2" r="1.5" fill="#1868db"/></svg>
<div class="a t " style="left:1661.50px;top:157.76px;font-size:12.8px;line-height:12.8px;color:#1868db;-webkit-text-stroke:0.25px #1868db;">2</div>
<svg class="a" style="left:1694px;top:156px;" width="15" height="15" viewBox="0 0 15 15" fill="none"><path d="M1 6.5H4V14H1Z M4 7L7.3 1.2Q9.3 1.2 8.8 4L8.4 6H12.6Q14.2 6.3 13.8 8L12.8 12.6Q12.4 14 11 14H4" stroke="#505258" stroke-width="1.4" stroke-linejoin="round"/></svg>
<svg class="a" style="left:1729px;top:156px;" width="15" height="15" viewBox="0 0 15 15" fill="none"><circle cx="11.5" cy="2.8" r="2" stroke="#292a2e" stroke-width="1.4"/><circle cx="3" cy="7.5" r="2" stroke="#292a2e" stroke-width="1.4"/><circle cx="11.5" cy="12.2" r="2" stroke="#292a2e" stroke-width="1.4"/><path d="M4.8 6.5L9.7 3.8M4.8 8.5L9.7 11.2" stroke="#292a2e" stroke-width="1.4"/></svg>
<div class="a" style="left:1766.5px;top:162px;width:2.6px;height:2.6px;border-radius:50%;background:#505258"></div>
<div class="a" style="left:1772.5px;top:162px;width:2.6px;height:2.6px;border-radius:50%;background:#505258"></div>
<div class="a" style="left:1778.5px;top:162px;width:2.6px;height:2.6px;border-radius:50%;background:#505258"></div>
<div class="a" style="left:1241px;top:191px;width:66px;height:28px;border-radius:3px;background:#ebecee"></div>
<div class="a t " style="left:1248.50px;top:198.20px;font-size:13px;line-height:13px;color:#292a2e;-webkit-text-stroke:0.25px #292a2e;">Open</div>
<svg class="a" style="left:1287px;top:202px;" width="9" height="6" viewBox="0 0 9 6" fill="none"><path d="M1 1L4.5 4.8L8 1" stroke="#292a2e" stroke-width="1.3"/></svg>
<div class="a" style="left:1315px;top:191px;width:28px;height:28px;border:1px solid #dcdee3;border-radius:3px;background:#fff"></div>
<svg class="a" style="left:1320px;top:196px;" width="17" height="17" viewBox="0 0 17 17" fill="none"><path d="M10.9 2.1L4 9.3L14.4 9.2L7.4 15.6L8.7 9.25Z" stroke="#292a2e" stroke-width="1.3" stroke-linejoin="round"/></svg>
<div class="a" style="left:1237px;top:230px;width:550px;height:45px;border:1px solid #dfe1e5;border-radius:3px;background:#fff"></div>
<div class="a t " style="left:1246.00px;top:245.70px;font-size:14.3px;line-height:14.3px;color:#292a2e;-webkit-text-stroke:0.45px #292a2e;">SLAs</div>
<svg class="a" style="left:1765px;top:248px;" width="6" height="10" viewBox="0 0 6 10" fill="none"><path d="M1 1L5 5L1 9" stroke="#292a2e" stroke-width="1.3"/></svg>
<div class="a" style="left:1237px;top:278px;width:560px;height:110px;border-radius:8px;background:linear-gradient(90deg,rgba(252,214,170,0.35),rgba(230,200,250,0.35) 60%,rgba(190,200,255,0.35));filter:blur(6px)"></div>
<div class="a" style="left:1237px;top:284px;width:550px;height:96px;border:1px solid #d5d8de;border-left-color:#80848c;border-bottom:1.5px solid #4f6fd8;border-radius:3px;background:#fff"></div>
<div class="a t " style="left:1246.50px;top:297.83px;font-size:15.2px;line-height:15.2px;color:#292a2e;-webkit-text-stroke:0.45px #292a2e;">Suggestions</div>
<svg class="a" style="left:1762px;top:303px;" width="10" height="6" viewBox="0 0 10 6" fill="none"><path d="M1 1L5 5L9 1" stroke="#292a2e" stroke-width="1.3"/></svg>
<svg class="a" style="left:1259px;top:347px;" width="10" height="11" viewBox="0 0 10 11" fill="none"><path d="M5 0.5L9.5 3V8L5 10.5L0.5 8V3Z" fill="#1868db"/><path d="M5 0.5L9.5 3V5.5L5 4Z" fill="#bf63f3"/><path d="M9.5 5.5V8L5 10.5L4.3 7.5Z" fill="#82b536"/><path d="M5 .5L.5 3L2 4.5L5 3Z" fill="#fca700"/><path d="M3.6 3.6L6.4 4.9V7.6L3.6 6.3Z" fill="#fff"/></svg>
<div class="a t " style="left:1279.00px;top:345.74px;font-size:13.3px;line-height:13.3px;color:#6b6e76;">Rovo is generating suggestions</div>
<div class="a" style="left:1476px;top:352px;width:2.6px;height:2.6px;border-radius:50%;background:#1868db"></div>
<div class="a" style="left:1481px;top:352px;width:2.6px;height:2.6px;border-radius:50%;background:#1868db"></div>
<div class="a" style="left:1486px;top:352px;width:2.6px;height:2.6px;border-radius:50%;background:#1868db"></div>
<div class="a" style="left:1237px;top:387px;width:550px;height:592px;border:1px solid #dfe1e5;border-radius:3px;background:#fff"></div>
<div class="a t " style="left:1245.80px;top:402.30px;font-size:15px;line-height:15px;color:#292a2e;-webkit-text-stroke:0.45px #292a2e;">Details</div>
<svg class="a" style="left:1763px;top:407px;" width="10" height="6" viewBox="0 0 10 6" fill="none"><path d="M1 1L5 5L9 1" stroke="#292a2e" stroke-width="1.3"/></svg>
<div class="a t " style="left:1249.40px;top:445.24px;font-size:13.3px;line-height:13.3px;color:#505258;-webkit-text-stroke:0.25px #505258;">Request Type</div>
<div class="a t " style="left:1249.40px;top:484.94px;font-size:13.3px;line-height:13.3px;color:#505258;-webkit-text-stroke:0.25px #505258;">Severity</div>
<div class="a t " style="left:1249.40px;top:522.94px;font-size:13.3px;line-height:13.3px;color:#505258;-webkit-text-stroke:0.25px #505258;">Major incident</div>
<div class="a t " style="left:1249.40px;top:560.74px;font-size:13.3px;line-height:13.3px;color:#505258;-webkit-text-stroke:0.25px #505258;">Slack</div>
<div class="a t " style="left:1249.40px;top:610.74px;font-size:13.3px;line-height:13.3px;color:#505258;-webkit-text-stroke:0.25px #505258;">Assignee</div>
<div class="a t " style="left:1249.40px;top:662.04px;font-size:13.3px;line-height:13.3px;color:#505258;-webkit-text-stroke:0.25px #505258;">Responders</div>
<div class="a t " style="left:1249.40px;top:704.54px;font-size:13.3px;line-height:13.3px;color:#505258;-webkit-text-stroke:0.25px #505258;">Knowledge base</div>
<div class="a t " style="left:1249.40px;top:740.74px;font-size:13.3px;line-height:13.3px;color:#505258;-webkit-text-stroke:0.25px #505258;">Linked alerts</div>
<div class="a t " style="left:1249.40px;top:780.04px;font-size:13.3px;line-height:13.3px;color:#505258;-webkit-text-stroke:0.25px #505258;">Labels</div>
<div class="a t " style="left:1249.40px;top:820.04px;font-size:13.3px;line-height:13.3px;color:#505258;-webkit-text-stroke:0.25px #505258;">Reporter</div>
<div class="a t " style="left:1249.40px;top:859.74px;font-size:13.3px;line-height:13.3px;color:#505258;-webkit-text-stroke:0.25px #505258;">Stakeholders</div>
<div class="a t " style="left:1249.40px;top:898.74px;font-size:13.3px;line-height:13.3px;color:#505258;-webkit-text-stroke:0.25px #505258;">Microsoft Teams</div>
<div class="a t " style="left:1249.40px;top:939.04px;font-size:13.3px;line-height:13.3px;color:#505258;-webkit-text-stroke:0.25px #505258;">Zoom</div>
<svg class="a" style="left:1466px;top:449px;" width="11" height="10" viewBox="0 0 11 10" fill="none"><path d="M5.5 0.8L10.3 9.2H0.7Z" fill="#fbc828" stroke="#e5a500" stroke-width="0.6" stroke-linejoin="round"/><path d="M5.5 3.5V6.5" stroke="#292a2e" stroke-width="1"/><circle cx="5.5" cy="7.7" r="0.5" fill="#292a2e"/></svg>
<div class="a t " style="left:1491.30px;top:446.03px;font-size:13.2px;line-height:13.2px;color:#292a2e;">Report a system issue</div>
<div class="a t " style="left:1459.30px;top:484.94px;font-size:13.3px;line-height:13.3px;color:#6b6e76;">None</div>
<svg class="a" style="left:1339px;top:522px;" width="14" height="14" viewBox="0 0 14 14" fill="none"><circle cx="7" cy="7" r="7" fill="#292a2e"/><path d="M7 6V10.8" stroke="#fff" stroke-width="1.6"/><circle cx="7" cy="3.7" r="1" fill="#fff"/></svg>
<div class="a" style="left:1460.8px;top:524px;width:28.5px;height:14px;border-radius:7px;background:#5b7f24"></div>
<svg class="a" style="left:1464px;top:527px;" width="9" height="8" viewBox="0 0 9 8" fill="none"><path d="M1 4L3.5 6.5L8 1.5" stroke="#fff" stroke-width="1.4"/></svg>
<div class="a" style="left:1476.5px;top:526px;width:10px;height:10px;border-radius:50%;background:#fff"></div>
<svg class="a" style="left:1289px;top:562px;" width="14" height="14" viewBox="0 0 14 14" fill="none"><path d="M8 1.5L12.5 6L11 7.2L9.5 6.8L7.3 9L7.5 11L6.6 11.9L2.1 7.4L3 6.5L5 6.7L7.2 4.5L6.8 3Z M4.3 9.7L1.3 12.7" stroke="#505258" stroke-width="1.2" stroke-linejoin="round"/></svg>
<svg class="a" style="left:1458px;top:559.5px" width="17" height="17" viewBox="0 0 24 24"><path fill="#E01E5A" d="M5.042 15.165a2.528 2.528 0 0 1-2.52 2.523A2.528 2.528 0 0 1 0 15.165a2.527 2.527 0 0 1 2.522-2.52h2.52v2.52zM6.313 15.165a2.527 2.527 0 0 1 2.521-2.52 2.527 2.527 0 0 1 2.521 2.52v6.313A2.528 2.528 0 0 1 8.834 24a2.528 2.528 0 0 1-2.521-2.522v-6.313z"/><path fill="#36C5F0" d="M8.834 5.042a2.528 2.528 0 0 1-2.521-2.52A2.528 2.528 0 0 1 8.834 0a2.528 2.528 0 0 1 2.521 2.522v2.52H8.834zM8.834 6.313a2.528 2.528 0 0 1 2.521 2.521 2.528 2.528 0 0 1-2.521 2.521H2.522A2.528 2.528 0 0 1 0 8.834a2.528 2.528 0 0 1 2.522-2.521h6.312z"/><path fill="#2EB67D" d="M18.956 8.834a2.528 2.528 0 0 1 2.522-2.521A2.528 2.528 0 0 1 24 8.834a2.528 2.528 0 0 1-2.522 2.521h-2.522V8.834zM17.688 8.834a2.528 2.528 0 0 1-2.523 2.521 2.527 2.527 0 0 1-2.52-2.521V2.522A2.527 2.527 0 0 1 15.165 0a2.528 2.528 0 0 1 2.523 2.522v6.312z"/><path fill="#ECB22E" d="M15.165 18.956a2.528 2.528 0 0 1 2.523 2.522A2.528 2.528 0 0 1 15.165 24a2.527 2.527 0 0 1-2.52-2.522v-2.522h2.52zM15.165 17.688a2.527 2.527 0 0 1-2.52-2.523 2.526 2.526 0 0 1 2.52-2.52h6.313A2.527 2.527 0 0 1 24 15.165a2.528 2.528 0 0 1-2.522 2.523h-6.313z"/></svg>
<div class="a" style="left:1485px;top:554px;width:155px;height:28px;background:#b4d3f8"></div>
<div class="a t " style="left:1485.30px;top:560.66px;font-size:13.4px;line-height:13.4px;color:#1868db;text-decoration:underline;">Open #incident-ito-12447</div>
<div class="a" style="left:1667px;top:556px;width:24px;height:10px;border:1px solid #dcdee3;border-radius:3px 3px 0 0;border-bottom:0;background:#fff"></div>
<svg class="a" style="left:1459px;top:597px" width="21" height="21" viewBox="0 0 22 22"><defs><clipPath id="cr"><circle cx="11" cy="11" r="11"/></clipPath></defs><g clip-path="url(#cr)"><rect width="22" height="22" fill="#f5a800"/><path d="M6.5 22V14H15.5V22Z" fill="#f8dcd8"/><ellipse cx="11" cy="10.5" rx="5" ry="5.8" fill="#f7dcc4"/><path d="M5.8 8.5Q5.5 3.5 11 3.5Q16.5 3.5 16.2 8.5Q14 6.5 11 6.8Q8 6.5 5.8 8.5Z" fill="#1c2e5a"/><path d="M7 10h3M12 10h3" stroke="#8a8a8a" stroke-width="0.7"/></g></svg>
<div class="a t " style="left:1488.20px;top:600.36px;font-size:13.4px;line-height:13.4px;color:#292a2e;">Ryan Lee</div>
<div class="a t " style="left:1460.00px;top:627.03px;font-size:13.2px;line-height:13.2px;color:#1868db;-webkit-text-stroke:0.45px #1868db;">Assign to me</div>
<div class="a t " style="left:1460.00px;top:662.21px;font-size:13.1px;line-height:13.1px;color:#292a2e;">6 Responders</div>
<svg class="a" style="left:1471.5px;top:701.5px;" width="12" height="14" viewBox="0 0 12 14" fill="none"><path d="M1 13V2A1.2 1.2 0 0 1 2.2 0.8H11V10.5H2.2A1.2 1.2 0 0 0 1 11.7A1.2 1.2 0 0 0 2.2 12.9H4" stroke="#292a2e" stroke-width="1.4"/><path d="M5.5 11V14L7 12.8L8.5 14V11" fill="#292a2e"/></svg>
<div class="a t " style="left:1495.60px;top:701.53px;font-size:13.2px;line-height:13.2px;color:#292a2e;">15 related articles</div>
<div class="a" style="left:1460px;top:737px;width:73px;height:22px;border:1px solid #dcdee3;border-radius:3px;background:#fff"></div>
<div class="a t " style="left:1471.00px;top:740.82px;font-size:13.8px;line-height:13.8px;color:#292a2e;-webkit-text-stroke:0.25px #292a2e;">View</div>
<div class="a" style="left:1504px;top:741px;width:21px;height:14px;border-radius:2px;background:#e8e9eb"></div>
<div class="a t " style="left:1507.50px;top:742.49px;font-size:11px;line-height:11px;color:#292a2e;">20</div>
<div class="a t " style="left:1459.60px;top:781.04px;font-size:13.3px;line-height:13.3px;color:#6b6e76;">None</div>
<svg class="a" style="left:1459px;top:816.5px" width="21" height="21" viewBox="0 0 22 22"><defs><clipPath id="ck1459816"><circle cx="11" cy="11" r="11"/></clipPath></defs><g clip-path="url(#ck1459816)"><rect width="22" height="22" fill="#1b5b9e"/><path d="M5 20V9Q5 2.5 11 2.5Q17 2.5 17 9V20Z" fill="#4a2b1e"/><ellipse cx="11" cy="10" rx="3.4" ry="5" fill="#d7a090"/><path d="M1 23Q3 15.5 9 15.5H13Q19 15.5 21 23Z" fill="#161616"/></g></svg>
<div class="a t " style="left:1488.30px;top:820.04px;font-size:13.3px;line-height:13.3px;color:#292a2e;">Kate Clavet-D'Amelio</div>
<div class="a t " style="left:1460.00px;top:859.74px;font-size:13.3px;line-height:13.3px;color:#292a2e;">None</div>
<div class="a t " style="left:1460.00px;top:898.49px;font-size:13.6px;line-height:13.6px;color:#1868db;-webkit-text-stroke:0.45px #1868db;">Connect Microsoft Teams</div>
<div class="a t " style="left:1460.00px;top:938.79px;font-size:13.6px;line-height:13.6px;color:#1868db;-webkit-text-stroke:0.45px #1868db;">Connect account</div>
<div class="a" style="left:1237px;top:987px;width:550px;height:46px;border:1px solid #dfe1e5;border-radius:3px;background:#fff"></div>
<div class="a t " style="left:1245.70px;top:1002.15px;font-size:15.3px;line-height:15.3px;color:#292a2e;-webkit-text-stroke:0.45px #292a2e;">More fields</div>
<div class="a t " style="left:1325.60px;top:1003.87px;font-size:11.5px;line-height:11.5px;color:#6b6e76;">Organizations, Source, Request participants, Application Impacted, Operati...</div>
<svg class="a" style="left:1766px;top:1004px;" width="6" height="10" viewBox="0 0 6 10" fill="none"><path d="M1 1L5 5L1 9" stroke="#292a2e" stroke-width="1.3"/></svg>
<div class="a" style="left:1237px;top:1039px;width:550px;height:60px;border:1px solid #dfe1e5;border-radius:3px;background:#fff"></div>
<div class="a t " style="left:1245.70px;top:1053.25px;font-size:15.3px;line-height:15.3px;color:#292a2e;-webkit-text-stroke:0.45px #292a2e;">Automation</div>
<svg class="a" style="left:1764px;top:1059px;" width="10" height="6" viewBox="0 0 10 6" fill="none"><path d="M1 1L5 5L9 1" stroke="#292a2e" stroke-width="1.3"/></svg>
<div class="a" style="left:1905px;top:131px;width:15px;height:949px;background:#fafafa;border-left:1px solid #e8e8e8;border-right:1px solid #ececec"></div>
<div class="a" style="left:1909px;top:134px;width:8px;height:794px;background:#c1c1c1;border-radius:4px"></div>
<div class="a" style="left:1563px;top:565.5px;width:341px;height:351.5px;border-radius:9px;box-shadow:0 8px 24px rgba(0,0,0,0.35);"></div>
<div class="a" style="left:1563px;top:561.5px;width:341px;height:351.5px;border-radius:9px;background:#616264;border:1px solid #161616;box-shadow:inset 0 0 0 1px #7c7d7f"></div>
<div class="a" style="left:1568px;top:567px;width:331.5px;height:22px;border-radius:4px;background:#4a8fe2"></div>
<div class="a t " style="left:1577.30px;top:571.67px;font-size:13.5px;line-height:13.5px;color:#fff;-webkit-text-stroke:0.25px #fff;">Open Link in New Tab</div>
<div class="a t " style="left:1577.30px;top:593.47px;font-size:13.5px;line-height:13.5px;color:#ebebea;-webkit-text-stroke:0.25px #ebebea;">Open Link in New Window</div>
<div class="a t " style="left:1577.30px;top:615.27px;font-size:13.5px;line-height:13.5px;color:#ebebea;-webkit-text-stroke:0.25px #ebebea;">Open Link in Incognito Window</div>
<div class="a t " style="left:1577.30px;top:648.57px;font-size:13.5px;line-height:13.5px;color:#8d8e90;-webkit-text-stroke:0.25px #8d8e90;">Save Link As...</div>
<div class="a t " style="left:1577.30px;top:670.67px;font-size:13.5px;line-height:13.5px;color:#ebebea;-webkit-text-stroke:0.25px #ebebea;">Copy Link Address</div>
<div class="a t " style="left:1577.30px;top:703.47px;font-size:13.5px;line-height:13.5px;color:#ebebea;-webkit-text-stroke:0.25px #ebebea;">Copy</div>
<div class="a t " style="left:1577.30px;top:725.47px;font-size:13.5px;line-height:13.5px;color:#ebebea;-webkit-text-stroke:0.25px #ebebea;">Copy Link to Highlight</div>
<div class="a t " style="left:1577.30px;top:747.57px;font-size:13.5px;line-height:13.5px;color:#ebebea;-webkit-text-stroke:0.25px #ebebea;">Search Google for “Open #incident-ito-12447”</div>
<div class="a t " style="left:1577.30px;top:768.87px;font-size:13.5px;line-height:13.5px;color:#ebebea;-webkit-text-stroke:0.25px #ebebea;">Print...</div>
<div class="a t " style="left:1577.30px;top:790.97px;font-size:13.5px;line-height:13.5px;color:#ebebea;-webkit-text-stroke:0.25px #ebebea;">Translate Selection to English</div>
<div class="a t " style="left:1577.30px;top:823.97px;font-size:13.5px;line-height:13.5px;color:#ebebea;-webkit-text-stroke:0.25px #ebebea;">Inspect</div>
<div class="a t " style="left:1577.30px;top:856.97px;font-size:13.5px;line-height:13.5px;color:#ebebea;-webkit-text-stroke:0.25px #ebebea;">Speech</div>
<div class="a t " style="left:1577.30px;top:890.07px;font-size:13.5px;line-height:13.5px;color:#ebebea;-webkit-text-stroke:0.25px #ebebea;">Services</div>
<div class="a" style="left:1577px;top:638.6px;width:313px;height:1px;background:#7a7a76"></div>
<div class="a" style="left:1577px;top:693.3px;width:313px;height:1px;background:#7a7a76"></div>
<div class="a" style="left:1577px;top:814.3px;width:313px;height:1px;background:#7a7a76"></div>
<div class="a" style="left:1577px;top:847.4px;width:313px;height:1px;background:#7a7a76"></div>
<div class="a" style="left:1577px;top:880.4px;width:313px;height:1px;background:#7a7a76"></div>
<svg class="a" style="left:1881px;top:858.4px;" width="7" height="11" viewBox="0 0 7 11" fill="none"><path d="M1 1L5.5 5.5L1 10" stroke="#ebebea" stroke-width="1.4"/></svg>
<svg class="a" style="left:1881px;top:891.5px;" width="7" height="11" viewBox="0 0 7 11" fill="none"><path d="M1 1L5.5 5.5L1 10" stroke="#ebebea" stroke-width="1.4"/></svg>
<svg class="a" style="left:1580.5px;top:574.5px;" width="12" height="18" viewBox="0 0 12 18" fill="none"><path d="M1 1V13.2L4 10.6L6.2 15.8L8.3 14.9L6.1 9.9H10.3Z" fill="#000" stroke="#fff" stroke-width="1.1" stroke-linejoin="round"/></svg>
</body></html>
